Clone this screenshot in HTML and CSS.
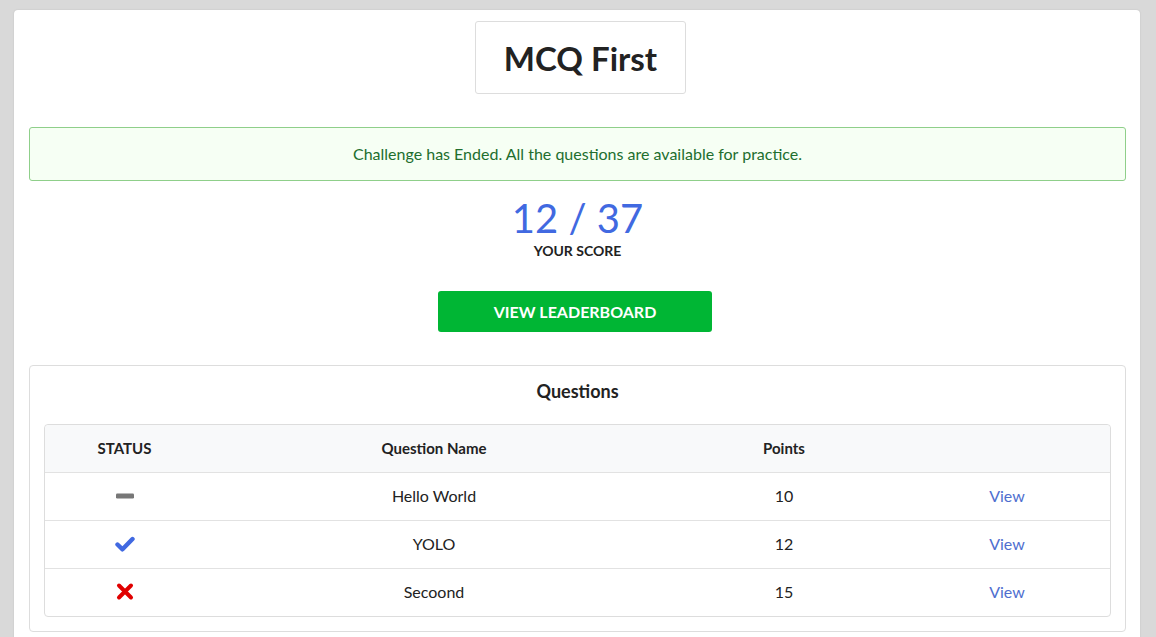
FILE: index.html
```html
<!DOCTYPE html>
<html>
<head>
<meta charset="utf-8">
<link rel="stylesheet" href="styles.css">
</head>
<body>
<div class="page">
  <div class="title-wrap"><h1 class="title">MCQ First</h1></div>
  <div class="alert">Challenge has Ended. All the questions are available for practice.</div>
  <div class="score">
    <div class="score-num">12 / 37</div>
    <div class="score-label">YOUR SCORE</div>
  </div>
  <div class="btn-wrap"><a class="btn">VIEW LEADERBOARD</a></div>
  <div class="qcard">
    <h2 class="qtitle">Questions</h2>
    <table class="qtable">
      <thead>
        <tr><th class="c1">STATUS</th><th class="c2">Question Name</th><th class="c3">Points</th><th class="c4"></th></tr>
      </thead>
      <tbody>
        <tr>
          <td><svg class="ico" width="20" height="20" viewBox="0 0 20 20"><rect x="1" y="7.5" width="18" height="5" rx="1.2" fill="#777"/></svg></td>
          <td>Hello World</td><td>10</td><td><a class="view">View</a></td>
        </tr>
        <tr>
          <td><svg class="ico" width="20" height="20" viewBox="0 0 20 20"><polyline points="2.5,10.5 7.5,15.3 17.5,5" fill="none" stroke="#4169e1" stroke-width="4.4" stroke-linecap="round" stroke-linejoin="round"/></svg></td>
          <td>YOLO</td><td>12</td><td><a class="view">View</a></td>
        </tr>
        <tr>
          <td><svg class="ico" width="20" height="20" viewBox="0 0 20 20"><path d="M4 3.5 L16 15.5 M16 3.5 L4 15.5" fill="none" stroke="#e00000" stroke-width="4" stroke-linecap="round"/></svg></td>
          <td>Secoond</td><td>15</td><td><a class="view">View</a></td>
        </tr>
      </tbody>
    </table>
  </div>
</div>
</body>
</html>
```
FILE: styles.css
```css
html, body {
  margin: 0;
  padding: 0;
}
body {
  background: #d9d9d9;
  font-family: Lato, "Open Sans", sans-serif;
  color: #222;
  padding: 10px 16px 0 14px;
  height: 637px;
  box-sizing: border-box;
  overflow: hidden;
}
.page {
  background: #fff;
  border-radius: 4px;
  box-shadow: 0 0 2px rgba(0,0,0,0.12);
  padding: 11px 14px 20px 15px;
  min-height: 700px;
  box-sizing: border-box;
}
.title-wrap {
  display: flex;
  justify-content: center;
  padding-left: 6px;
}
.title {
  margin: 0;
  width: 211px;
  height: 73px;
  box-sizing: border-box;
  border: 1px solid #ddd;
  border-radius: 3px;
  display: flex;
  align-items: center;
  justify-content: center;
  font-size: 33px;
  font-weight: 700;
  color: #222;
}
.alert {
  margin-top: 33px;
  height: 54px;
  box-sizing: border-box;
  border: 1px solid #8fcf8a;
  border-radius: 3px;
  background: #f6fff4;
  color: #216e2e;
  font-size: 16px;
  padding-bottom: 1px;
  display: flex;
  align-items: center;
  justify-content: center;
}
.score {
  text-align: center;
  margin-top: 15px;
}
.score-num {
  font-size: 40px;
  line-height: 44px;
  color: #4169e1;
  font-weight: 400;
}
.score-label {
  font-size: 14px;
  font-weight: 700;
  line-height: 15px;
  margin-top: 3px;
  color: #222;
}
.btn-wrap {
  display: flex;
  justify-content: center;
  margin-top: 33px;
  padding-right: 5px;
}
.btn {
  width: 274px;
  height: 41px;
  background: #00b634;
  color: #fff;
  border-radius: 3px;
  font-size: 16px;
  font-weight: 700;
  display: flex;
  align-items: center;
  justify-content: center;
}
.qcard {
  margin-top: 33px;
  border: 1px solid #ddd;
  border-radius: 4px;
  padding: 0 14px 14px 14px;
}
.qtitle {
  margin: 0;
  font-size: 18px;
  font-weight: 700;
  text-align: center;
  height: 58px;
  line-height: 50px;
  color: #222;
}
.qtable {
  width: 100%;
  border-collapse: separate;
  border-spacing: 0;
  border: 1px solid #ddd;
  border-radius: 4px;
  font-size: 16px;
}
.qtable th, .qtable td {
  height: 47px;
  box-sizing: border-box;
  text-align: center;
  padding: 0 0 2px 0;
  border-top: 1px solid #e2e2e2;
  vertical-align: middle;
}
.qtable th {
  border-top: none;
  background: #f8f9fa;
  font-weight: 700;
  font-size: 15px;
  color: #222;
}
.qtable thead th:first-child { border-top-left-radius: 4px; }
.qtable thead th:last-child { border-top-right-radius: 4px; }
.qtable td { color: #222; height: 48px; }
.c1 { width: 159px; }
.c2 { width: 460px; }
.c3 { width: 240px; }
.ico { display: block; margin: 0 auto; }
.view {
  color: #4f6fcf;
}
```
